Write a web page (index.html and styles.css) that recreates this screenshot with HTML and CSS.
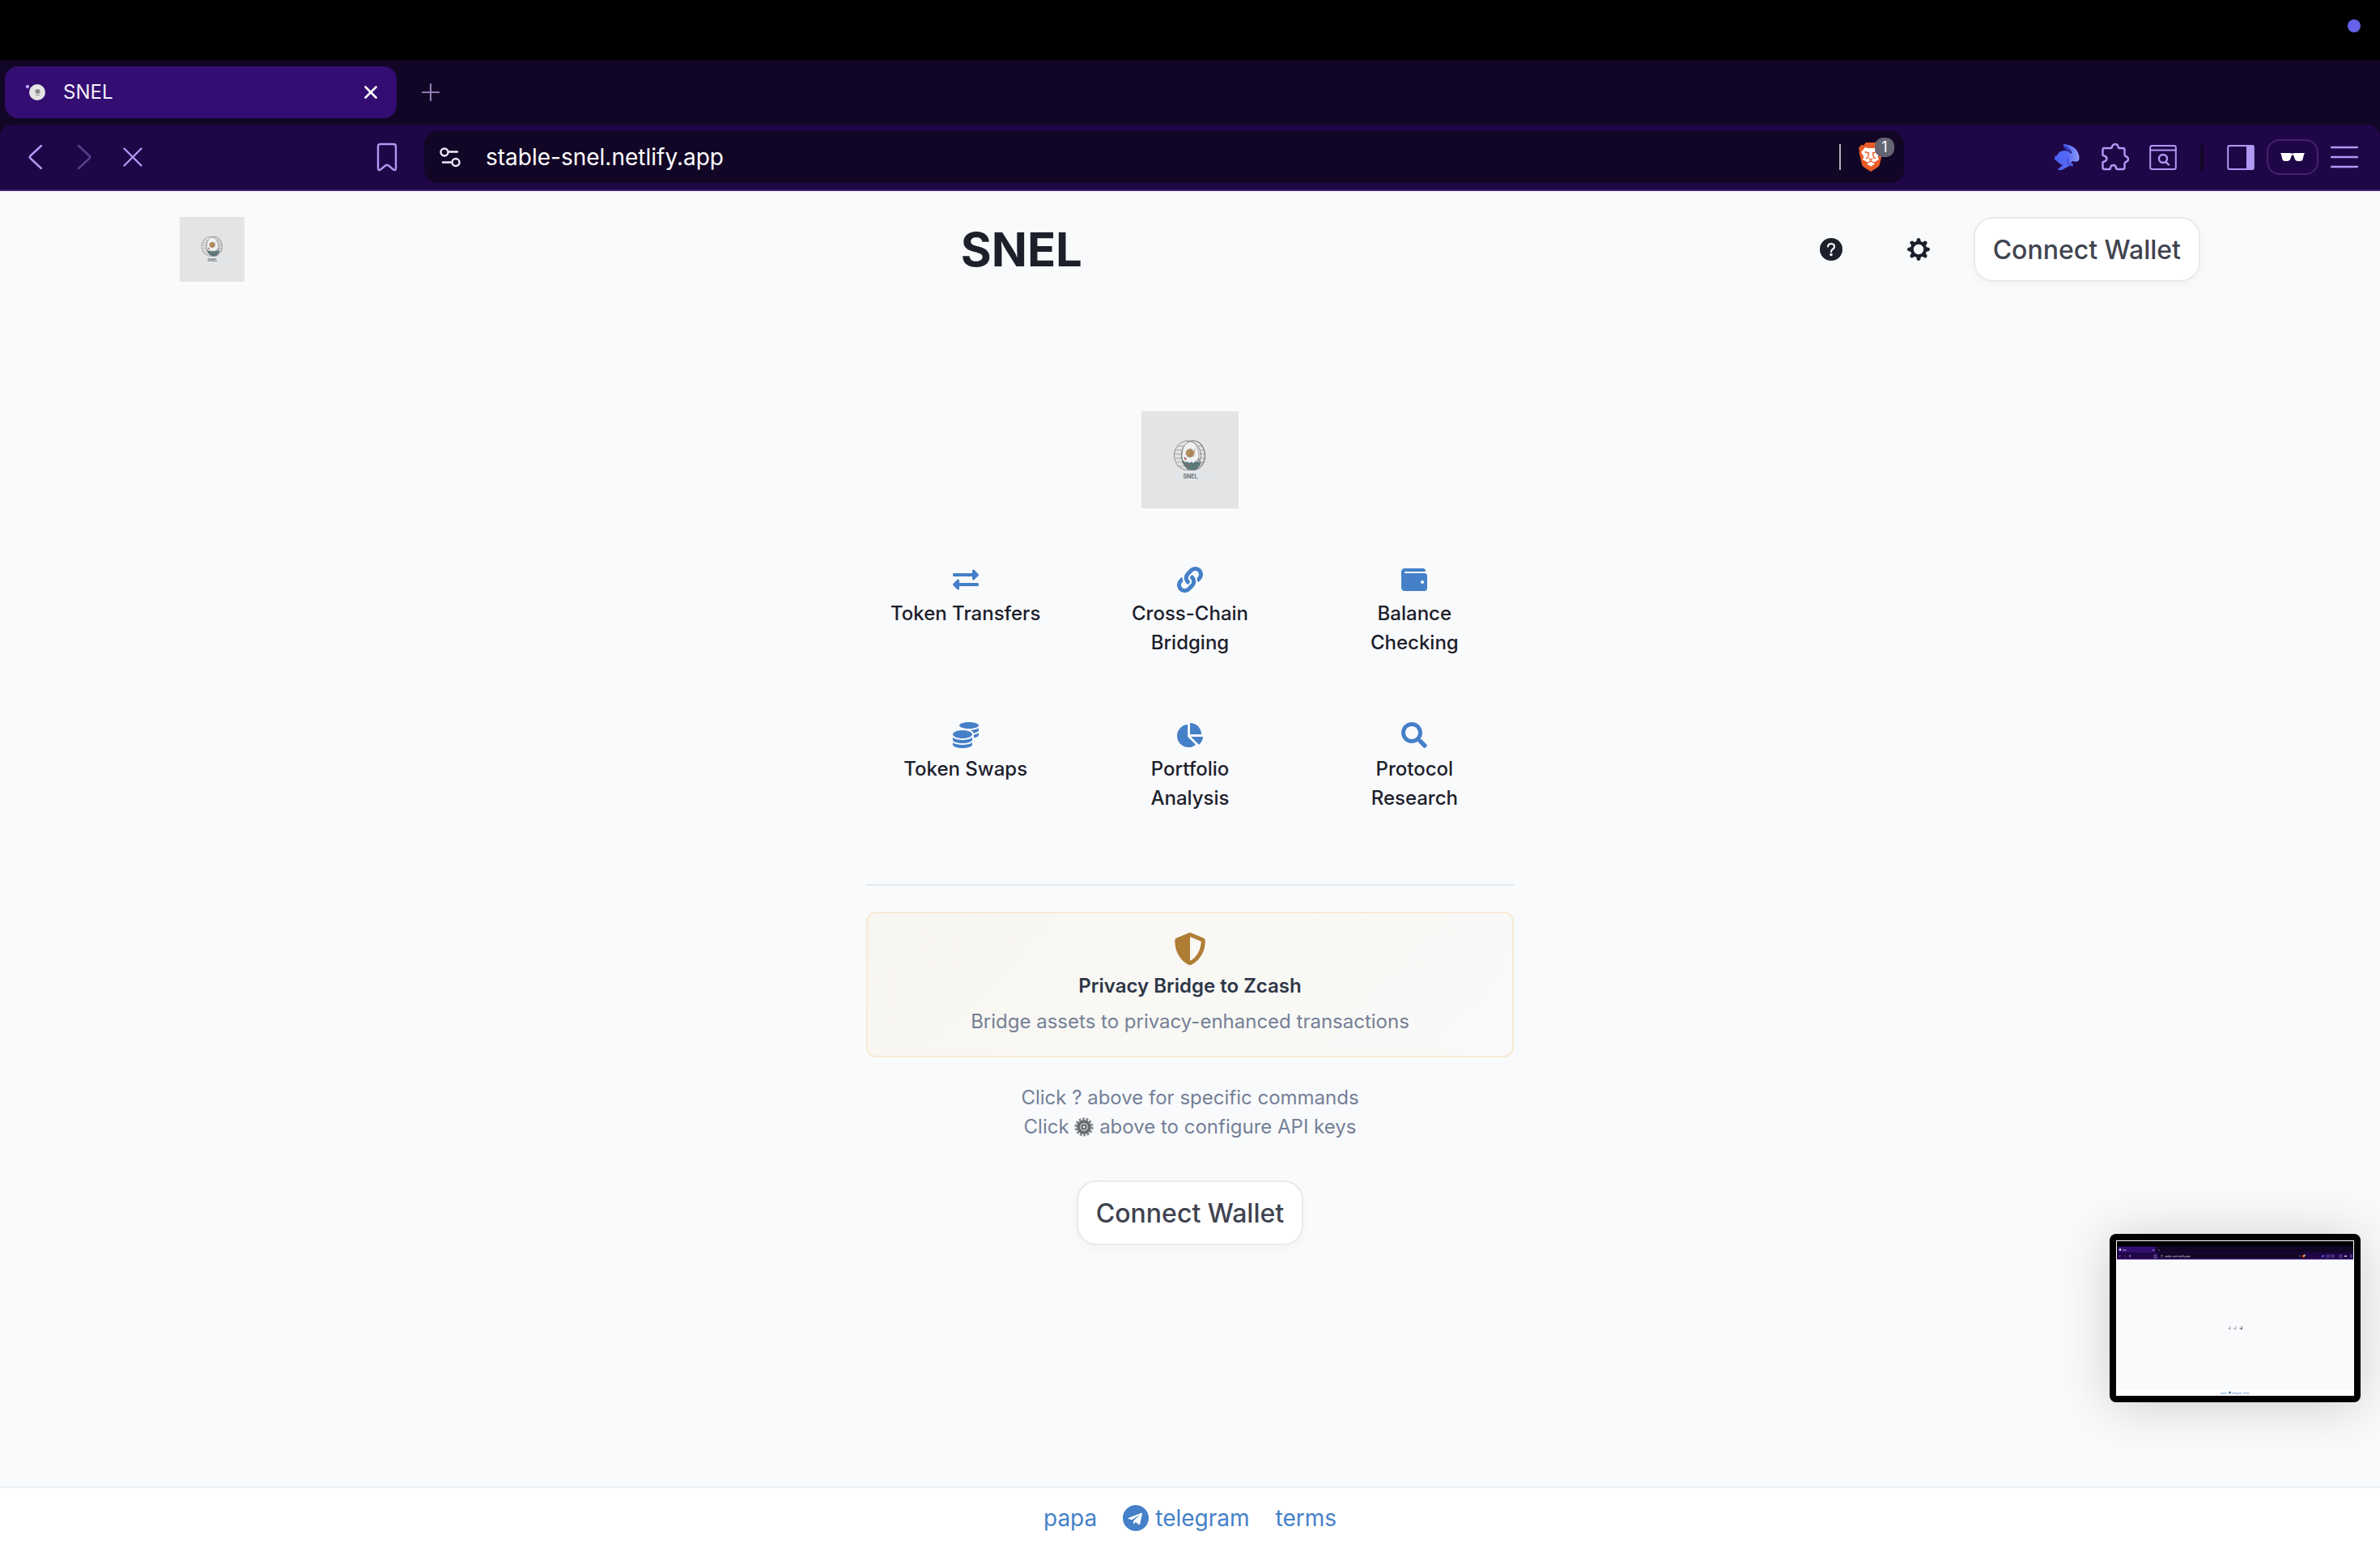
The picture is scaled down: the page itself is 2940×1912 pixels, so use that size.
FILE: index.html
```html
<!DOCTYPE html>
<html lang="en">
<head>
    <meta charset="UTF-8">
    <meta name="viewport" content="width=device-width, initial-scale=1.0">
    <title>SNEL</title>
    <link rel="stylesheet" href="styles.css">
</head>
<body>

    <!-- Browser window -->
    <div class="menu-bar"><span class="recording-dot"></span></div>

    <div class="tab-strip">
        <div class="tab">
            <svg class="favicon" viewBox="0 0 28 24"><circle cx="16" cy="12" r="10" fill="#e4e4e4"/><circle cx="4" cy="5" r="2.200" fill="#b39bf4"/><circle cx="16.500" cy="11" r="3" fill="#8d8b87"/><path d="M14 15.500h5" stroke="#9a9a9a"/></svg>
            <span class="tab-title">SNEL</span>
            <button class="icon-btn" aria-label="Close tab">
                <svg width="16" height="16" viewBox="0 0 16 16"><path d="M1.500 1.500l13 13M14.500 1.500l-13 13" stroke="#fff" stroke-width="2.600" stroke-linecap="round"/></svg>
            </button>
        </div>
        <button class="icon-btn" aria-label="New tab">
            <svg width="22" height="22" viewBox="0 0 22 22"><path d="M11 1v20M1 11h20" stroke="#8a7bb0" stroke-width="2.200" stroke-linecap="round"/></svg>
        </button>
    </div>

    <div class="toolbar">
        <div class="nav-buttons">
            <button class="icon-btn" aria-label="Back">
                <svg width="32" height="32" viewBox="0 0 32 32"><path d="M23 2L9.500 14.500q-1.500 1.500 0 3L23 30" class="line"/></svg>
            </button>
            <button class="icon-btn dim" aria-label="Forward">
                <svg width="32" height="32" viewBox="0 0 32 32"><path d="M9 2l13.500 12.500q1.500 1.500 0 3L9 30" class="line"/></svg>
            </button>
            <button class="icon-btn" aria-label="Stop loading">
                <svg width="32" height="32" viewBox="0 0 32 32"><path d="M5.500 5.500l21 21M26.500 5.500l-21 21" class="line"/></svg>
            </button>
            <button class="icon-btn bookmark" aria-label="Bookmark">
                <svg width="32" height="36" viewBox="0 0 32 36"><path d="M5 5q0-3 3-3h16q3 0 3 3v27q0 3-3 1.500l-6-5q-2-1.500-4 0l-6 5q-3 1.500-3-1.500z" class="line"/></svg>
            </button>
        </div>

        <div class="address-bar">
            <button class="icon-btn" aria-label="Site settings">
                <svg width="28" height="28" viewBox="0 0 28 28" fill="none" stroke="#eee9fa" stroke-width="2.400" stroke-linecap="round"><circle cx="7" cy="8" r="4.500"/><path d="M12 7.500h11M5 20.500h10"/><circle cx="21" cy="20.500" r="4.500"/></svg>
            </button>
            <input class="url" type="text" aria-label="Address" value="stable-snel.netlify.app">
            <span class="address-rule"></span>
            <button class="icon-btn shields" aria-label="Brave Shields">
                <svg width="30" height="36" viewBox="0 0 30 36">
                    <path d="M9 0h12l3 3.500 3-.5 3 4-1 3 .5 2-3.500 15q-.5 2-2.500 3.500L15 36l-8.500-5.500Q4.500 29 4 27L.5 12 1 10 0 7l3-4 3 .5z" fill="#e95b27"/>
                    <path d="M8 6l4 1h6l4-1 5 6-3.500 5.500 1.500 3.500-6 3.500-4-2.500-4 2.500L5 21l1.500-3.500L3 12z" fill="#fff"/>
                    <path d="M15 23.500l5 3-5 3-5-3z" fill="#fff"/>
                    <path d="M7.500 11.500l5 1.500-1 5-2.500 2M22.500 11.500l-5 1.500 1 5 2.500 2M12.500 19.500L15 21l2.500-1.500M15 21v3" stroke="#e95b27" stroke-width="1.400" fill="none"/>
                </svg>
                <span class="badge">1</span>
            </button>
        </div>

        <div class="tools">
            <div class="extensions">
                <button class="icon-btn" aria-label="Rabby Wallet">
                    <svg width="34" height="34" viewBox="0 0 34 34">
                        <defs>
                            <linearGradient id="rabbit" x1="0" y1="0" x2="1" y2="0"><stop offset="0" stop-color="#4a5df0"/><stop offset=".55" stop-color="#566bf3"/><stop offset="1" stop-color="#8d9bfa"/></linearGradient>
                        </defs>
                        <path d="M12 1q15 1 19 13 1 5 0 7-2 3-8 1l-2 2 3 2v2h-5l-9 5H5l1-2 5-4q-4-1-7-5l-3-2 0-3q1-2 3-2 2-6 9-6 5 0 9 4 1-5-7-8-4-2-3-4z" fill="url(#rabbit)"/>
                        <path d="M12 3q5 0 9 7l-1 2q-2-3-5-4-3-2-3-5z" fill="#3037b8"/>
                        <path d="M17 17q3 2 1 8l6 1v2q-4 1-8-2z" fill="#4150dc"/>
                    </svg>
                </button>
                <button class="icon-btn" aria-label="Extensions">
                    <svg width="34" height="34" viewBox="0 0 34 34"><path d="M3 6q-1.500 0-1.500 2v6q0 1.500 2 1.500 3 1 3 3.500t-3 3.500q-2 0-2 1.500v6q0 2 2 2h6q1.500 0 1.500-2 .5-3 3.500-3t3.500 3q0 2 1.500 2h7q2 0 2-2v-5q0-1.500 1.500-2 3-1 3-3.500t-3-3.500q-1.500-.5-1.500-2V8q0-2-2-2h-4q-2 0-2-2-.500-3-3.500-3T13 4q0 2-2 2z" class="line"/></svg>
                </button>
                <button class="icon-btn" aria-label="Search tabs">
                    <svg width="34" height="34" viewBox="0 0 34 34"><rect x="1.200" y="3" width="31.600" height="29" rx="2" class="line thin"/><path d="M1 8.500h32" class="line thin"/><circle cx="17" cy="19" r="5" class="line"/><path d="M20.500 23l3.500 3.500" class="line"/></svg>
                </button>
            </div>
            <span class="tools-rule"></span>
            <button class="icon-btn" aria-label="Sidebar">
                <svg width="34" height="34" viewBox="0 0 34 34"><rect x="1.200" y="3" width="31.600" height="29" rx="2" class="line thin"/><path d="M24 2.500h9v30h-9z" fill="#af99f3"/></svg>
            </button>
            <button class="icon-btn private" aria-label="Private window">
                <svg width="30" height="12" viewBox="0 0 30 12"><path d="M0 1h12.500q2.500 1 5 0H30l-1 2-1.500 6q-.5 2-3 2h-3q-2.500 0-3.500-2l-2-5.500h-2L12 9q-1 2-3.500 2h-3q-2.500 0-3-2L1 3z" fill="#fff"/></svg>
            </button>
            <button class="icon-btn" aria-label="Menu">
                <svg width="34" height="34" viewBox="0 0 34 34"><path d="M1 5h32M1 17h32M1 29h32" class="line"/></svg>
            </button>
        </div>
    </div>

    <!-- App -->
    <div class="app">
        <header class="header">
            <svg class="logo-small" viewBox="0 0 120 120" role="img" aria-label="SNEL logo">
                <g id="snel-logo">
                    <rect width="120" height="120" fill="#e4e4e4"/>
                    <rect x="42" y="72" width="48" height="18" fill="#e2e5e8"/>
                    <ellipse cx="57" cy="54.500" rx="16.500" ry="18" fill="#e2e2e3" stroke="#8c8e91" stroke-width="1"/>
                    <path d="M45 43h7M42 48h8M41 53h9M41 58h9M42 63h8M44 68h8M70 43h6M72 48h6M72 53h7M72 58h7M71 63h7" stroke="#a3a5a8" stroke-width="1"/>
                    <ellipse cx="64" cy="54.500" rx="14.500" ry="18" fill="none" stroke="#75787b" stroke-width="1.200"/>
                    <ellipse cx="60.500" cy="54.500" rx="10.500" ry="17" fill="#eff0f0" stroke="#8f9092" stroke-width=".8"/>
                    <path d="M50 60q3 1 4 3 3-2 5 1 3-3 5 0 3-4 6-1 2-2 4 0-3 9-11 10-10 0-13-13z" fill="#60787a"/>
                    <path d="M53 57l2 3M57 66l1 2" stroke="#a8606c" stroke-width="2"/>
                    <path d="M68 61l3-2 1 4" stroke="#8f9a9a" stroke-width="1.500" fill="none"/>
                    <path d="M56 56q6 1 9-1l1-9" fill="none" stroke="#c0bcb6" stroke-width="1.200"/>
                    <circle cx="60" cy="51.500" r="4.800" fill="#b98f5c" stroke="#8f7350" stroke-width=".7"/>
                    <path d="M60 49a2.500 2.500 0 1 1-2 4" fill="none" stroke="#87694a" stroke-width=".8"/>
                    <text x="60.500" y="83" text-anchor="middle" class="logo-word">SNEL</text>
                </g>
            </svg>
            <h1>SNEL</h1>
            <div class="header-actions">
                <button class="icon-btn square" aria-label="Help">
                    <svg width="28" height="28" viewBox="0 0 28 28"><circle cx="14" cy="14" r="14" fill="#1c202b"/><path d="M10 10.500q.5-3.500 4.200-3.500 3.800.2 3.800 3.500 0 2-2 3.200-2 1.200-2 3.300" fill="none" stroke="#f9fafc" stroke-width="2.200" stroke-linecap="round"/><circle cx="14" cy="20.500" r="1.800" fill="#f9fafc"/></svg>
                </button>
                <button class="icon-btn square" aria-label="Settings">
                    <svg width="28" height="28" viewBox="0 0 28 28">
                        <circle cx="14" cy="14" r="8.200" fill="none" stroke="#1c202b" stroke-width="4"/>
                        <g fill="#1c202b">
                            <path id="tooth" d="M11 5l1-4q2-2 4 0l1 4z"/>
                            <use href="#tooth" transform="rotate(45 14 14)"/>
                            <use href="#tooth" transform="rotate(90 14 14)"/>
                            <use href="#tooth" transform="rotate(135 14 14)"/>
                            <use href="#tooth" transform="rotate(180 14 14)"/>
                            <use href="#tooth" transform="rotate(225 14 14)"/>
                            <use href="#tooth" transform="rotate(270 14 14)"/>
                            <use href="#tooth" transform="rotate(315 14 14)"/>
                        </g>
                    </svg>
                </button>
                <button class="connect-btn">Connect Wallet</button>
            </div>
        </header>

        <main class="welcome">
            <svg class="logo-large" viewBox="0 0 120 120" role="img" aria-label="SNEL logo"><use href="#snel-logo"/></svg>

            <div class="features">
                <div class="feature">
                    <svg viewBox="0 0 512 512"><path d="M0 168v-16c0-13.255 10.745-24 24-24h360V80c0-21.367 25.899-32.042 40.971-16.971l80 80c9.372 9.373 9.372 24.569 0 33.941l-80 80C409.956 271.982 384 261.456 384 240v-48H24c-13.255 0-24-10.745-24-24zm488 152H128v-48c0-21.314-25.862-32.08-40.971-16.971l-80 80c-9.372 9.373-9.372 24.569 0 33.941l80 80C102.057 463.997 128 453.437 128 432v-48h360c13.255 0 24-10.745 24-24v-16c0-13.255-10.745-24-24-24z"/></svg>
                    <p>Token Transfers</p>
                </div>
                <div class="feature">
                    <svg viewBox="0 0 512 512"><path d="M326.612 185.391c59.747 59.809 58.927 155.698.36 214.59-.11.12-.24.25-.36.37l-67.2 67.2c-59.27 59.27-155.699 59.262-214.96 0-59.27-59.26-59.27-155.7 0-214.96l37.106-37.106c9.84-9.84 26.786-3.3 27.294 10.606.648 17.722 3.826 35.527 9.69 52.721 1.986 5.822.567 12.262-3.783 16.612l-13.087 13.087c-28.026 28.026-28.905 73.66-1.155 101.96 28.024 28.579 74.086 28.749 102.325.51l67.2-67.19c28.191-28.191 28.073-73.757 0-101.83-3.701-3.694-7.429-6.564-10.341-8.569a16.037 16.037 0 0 1-6.947-12.606c-.396-10.567 3.348-21.456 11.698-29.806l21.054-21.055c5.521-5.521 14.182-6.199 20.584-1.731a152.482 152.482 0 0 1 20.522 17.197zM467.547 44.449c-59.261-59.262-155.69-59.27-214.96 0l-67.2 67.2c-.12.12-.25.25-.36.37-58.566 58.892-59.387 154.781.36 214.59a152.454 152.454 0 0 0 20.521 17.196c6.402 4.468 15.064 3.789 20.584-1.731l21.054-21.055c8.35-8.35 12.094-19.239 11.698-29.806a16.037 16.037 0 0 0-6.947-12.606c-2.912-2.005-6.64-4.875-10.341-8.569-28.073-28.073-28.191-73.639 0-101.83l67.2-67.19c28.239-28.239 74.3-28.069 102.325.51 27.75 28.3 26.872 73.934-1.155 101.96l-13.087 13.087c-4.35 4.35-5.769 10.79-3.783 16.612 5.864 17.194 9.042 34.999 9.69 52.721.509 13.906 17.454 20.446 27.294 10.606l37.106-37.106c59.271-59.259 59.271-155.699.001-214.959z"/></svg>
                    <p>Cross-Chain<br>Bridging</p>
                </div>
                <div class="feature">
                    <svg viewBox="0 0 512 512"><path d="M461.2 128H80c-8.84 0-16-7.16-16-16s7.16-16 16-16h384c8.84 0 16-7.16 16-16 0-26.51-21.49-48-48-48H64C28.65 32 0 60.65 0 96v320c0 35.35 28.65 64 64 64h397.2c28.02 0 50.8-21.53 50.8-48V176c0-26.47-22.78-48-50.8-48zM416 336c-17.67 0-32-14.33-32-32s14.33-32 32-32 32 14.33 32 32-14.33 32-32 32z"/></svg>
                    <p>Balance<br>Checking</p>
                </div>
                <div class="feature">
                    <svg viewBox="0 0 512 512"><path d="M0 405.3V448c0 35.3 86 64 192 64s192-28.7 192-64v-42.7C342.7 434.4 267.2 448 192 448S41.3 434.4 0 405.3zM320 128c106 0 192-28.7 192-64S426 0 320 0 128 28.7 128 64s86 64 192 64zM0 300.4V352c0 35.3 86 64 192 64s192-28.7 192-64v-51.6c-41.3 34-116.9 51.6-192 51.6S41.3 334.4 0 300.4zm416 11c57.3-11.1 96-31.7 96-55.4v-42.7c-23.2 16.4-57.3 27.6-96 34.5v63.6zM192 160C86 160 0 195.8 0 240s86 80 192 80 192-35.8 192-80-86-80-192-80zm219.3 56.3c60-10.8 100.7-32 100.7-56.3v-42.7c-35.5 25.1-96.5 38.6-160.7 41.8 29.5 14.3 51.2 33.5 60 57.2z"/></svg>
                    <p>Token Swaps</p>
                </div>
                <div class="feature">
                    <svg viewBox="0 0 544 512"><path d="M527.79 288H290.5l158.03 158.03c6.04 6.04 15.98 6.53 22.19.68 38.7-36.46 65.32-85.61 73.13-140.86 1.34-9.46-6.51-17.85-16.06-17.85zm-15.83-64.8C503.72 103.74 408.26 8.28 288.8.04 279.68-.59 272 7.1 272 16.24V240h223.77c9.14 0 16.82-7.68 16.19-16.8zM224 288V50.71c0-9.55-8.39-17.4-17.84-16.06C86.99 51.49-4.1 155.6.14 280.37 4.5 408.51 114.83 513.59 243.03 511.98c50.4-.63 96.97-16.87 135.26-44.03 7.9-5.6 8.42-17.23 1.57-24.08L224 288z"/></svg>
                    <p>Portfolio<br>Analysis</p>
                </div>
                <div class="feature">
                    <svg viewBox="0 0 512 512"><path d="M505 442.7L405.3 343c-4.5-4.5-10.6-7-17-7H372c27.6-35.3 44-79.7 44-128C416 93.1 322.9 0 208 0S0 93.1 0 208s93.1 208 208 208c48.3 0 92.7-16.4 128-44v16.3c0 6.4 2.5 12.5 7 17l99.7 99.7c9.4 9.4 24.6 9.4 33.9 0l28.3-28.3c9.4-9.4 9.4-24.6.1-34zM208 336c-70.7 0-128-57.2-128-128 0-70.7 57.2-128 128-128 70.7 0 128 57.2 128 128 0 70.7-57.2 128-128 128z"/></svg>
                    <p>Protocol<br>Research</p>
                </div>
            </div>

            <hr class="divider">

            <section class="privacy-card">
                <svg viewBox="0 0 512 512"><path d="M466.500 83.700l-192-80a48.150 48.150 0 0 0-36.900 0l-192 80C27.700 91.100 16 108.600 16 128c0 198.500 114.500 335.700 221.500 380.300 11.800 4.900 25.100 4.900 36.900 0C360.100 472.600 496 349.300 496 128c0-19.400-11.700-36.900-29.500-44.300zM256.100 446.300l-.1-381 175.900 73.300c-3.300 151.400-82.100 261.100-175.800 307.700z"/></svg>
                <h2>Privacy Bridge to Zcash</h2>
                <p>Bridge assets to privacy-enhanced transactions</p>
            </section>

            <p class="hints">
                Click ? above for specific commands<br>
                Click <svg class="gear" viewBox="0 0 24 24" role="img" aria-label="settings"><circle cx="12" cy="12" r="10" fill="none" stroke="#85878a" stroke-width="3" stroke-dasharray="2.800 1.690"/><circle cx="12" cy="12" r="7" fill="#b3b6ba" stroke="#66696d" stroke-width="3.600"/><circle cx="12" cy="12" r="2.500" fill="#e6e8ea" stroke="#55585c" stroke-width="1.600"/></svg> above to configure API keys
            </p>

            <button class="connect-btn">Connect Wallet</button>
        </main>

        <footer class="footer">
            <a href="#">papa</a>
            <a href="#">
                <svg viewBox="0 8 496 496"><path d="M248 8C111 8 0 119 0 256s111 248 248 248 248-111 248-248S385 8 248 8zm121.800 169.900l-40.700 191.800c-3 13.600-11.100 16.900-22.400 10.500l-62-45.700-29.900 28.800c-3.300 3.300-6.100 6.100-12.500 6.100l4.400-63.100 114.900-103.800c5-4.400-1.100-6.900-7.700-2.500l-142 89.400-61.200-19.100c-13.300-4.200-13.600-13.300 2.800-19.700l239.100-92.200c11.100-4 20.800 2.700 17.200 19.500z"/></svg>
                telegram
            </a>
            <a href="#">terms</a>
        </footer>
    </div>

    <!-- Floating screen capture preview -->
    <div class="capture">
        <svg viewBox="0 0 294 192">
            <rect width="294" height="192" fill="#fff"/>
            <rect x="1" y="1" width="292" height="7" fill="#000"/>
            <rect x="1" y="7" width="292" height="9" fill="#120626"/>
            <rect x="2" y="8" width="47" height="7" rx="1" fill="#330d72"/>
            <rect x="1" y="15" width="292" height="9" fill="#1f0646"/>
            <rect x="1" y="23" width="292" height="1" fill="#8a68b8"/>
            <rect x="53" y="16" width="182" height="6" rx="1" fill="#120626"/>
            <circle cx="5" cy="11.500" r="1.200" fill="#fff"/>
            <text x="8" y="12.500" class="mini tab-name">SNEL</text>
            <text x="60" y="21" class="mini">stable-snel.netlify.app</text>
            <path d="M45 11l2 2m0-2l-2 2M52 12h2" stroke="#b9a9e6" stroke-width=".6"/>
            <path d="M5.500 18L4 19.500 5.500 21M16 18l2 3m0-3l-2 3M47 18h3v4l-1.500-1L47 22z" fill="none" stroke="#af99f3" stroke-width=".6"/>
            <path d="M10 18l1.500 1.500L10 21" fill="none" stroke="#5b4190" stroke-width=".6"/>
            <path d="M55 18.500h3M55 20.500h3M227 18v3" stroke="#aaa" stroke-width=".6"/>
            <circle cx="231.500" cy="19.500" r="1.700" fill="#e95b27"/>
            <rect x="232" y="17.500" width="2" height="2" fill="#aaa"/>
            <path d="M254 19l3-1v2l-3 1z" fill="#5668f2"/>
            <path d="M260 18h3v3h-3zM266 18h3v3h-3zM276 18h3v3h-3zM289 18h3M289 19.500h3M289 21h3" fill="none" stroke="#8d76cf" stroke-width=".6"/>
            <path d="M282 19.500h3" stroke="#fff" stroke-width="1.200"/>
            <rect x="1" y="24" width="292" height="161" fill="#f9fafc"/>
            <path d="M138 108.500h2v1.500h1v-4M145 108.500h2v1.500h1v-4" fill="none" stroke="#a9abaf" stroke-width="1"/>
            <path d="M152.500 108.500h2v1.500h1v-4" fill="none" stroke="#6f7277" stroke-width="1"/>
            <text x="129" y="189.500" class="mini link">papa</text>
            <circle cx="140.500" cy="188" r="1.500" fill="#4580c8"/>
            <text x="143" y="189.500" class="mini link">telegram</text>
            <text x="157" y="189.500" class="mini link">terms</text>
        </svg>
    </div>

</body>
</html>
```
FILE: styles.css
```css
* {
    box-sizing: border-box;
}
body {
    display: flex;
    flex-direction: column;
    min-height: 100vh;
    margin: 0;
    background-color: #f9fafc;
    color: #1c202b;
    font-family: Inter, "Liberation Sans", sans-serif;
    font-size: 24px;
    line-height: 36px;
}
h1, h2, p {
    margin: 0;
}
svg {
    display: block;
    flex-shrink: 0;
}
button, input {
    font-family: inherit;
    border: none;
    background: none;
    padding: 0;
}
button {
    cursor: pointer;
}
.logo-word {
    font-size: 7px;
    font-weight: 600;
    fill: #5d676b;
}

/* Browser window */
.menu-bar {
    display: flex;
    align-items: flex-start;
    justify-content: flex-end;
    height: 74px;
    padding: 24px;
    background-color: #000;
}
.recording-dot {
    width: 16px;
    height: 16px;
    border-radius: 50%;
    background-color: #6661ea;
}
.icon-btn {
    display: flex;
    align-items: center;
    justify-content: center;
}
.line {
    fill: none;
    stroke: #af99f3;
    stroke-width: 2.4px;
    stroke-linecap: round;
    stroke-linejoin: round;
}
.thin {
    stroke-width: 2px;
}
.tab-strip {
    display: flex;
    align-items: center;
    gap: 31px;
    height: 80px;
    padding: 0 6px;
    background-color: #120626;
}
.tab {
    display: flex;
    align-items: center;
    width: 484px;
    height: 64px;
    padding: 0 24px;
    border-radius: 16px;
    background-color: #330d72;
}
.favicon {
    width: 28px;
    height: 24px;
    margin-right: 20px;
}
.tab-title {
    flex: 1;
    color: #f4effc;
}
.toolbar {
    display: flex;
    align-items: center;
    height: 82px;
    border-bottom: 2px solid #42236f;
    background:
        radial-gradient(circle at 100% 100%, #1f0646 16px, #120626 17px) left top / 16px 16px no-repeat,
        radial-gradient(circle at 0 100%, #1f0646 16px, #120626 17px) right top / 16px 16px no-repeat,
        #1f0646;
}
.nav-buttons {
    display: flex;
    align-items: center;
    gap: 28px;
    width: 524px;
    padding: 0 30px 0 28px;
}
.bookmark {
    margin-left: auto;
}
.dim {
    opacity: 0.4;
}
.address-bar {
    display: flex;
    align-items: center;
    flex: 1;
    height: 64px;
    padding: 0 26px 0 18px;
    border-radius: 16px;
    background-color: #120626;
}
.url {
    flex: 1;
    margin-left: 30px;
    color: #fff;
    font-size: 28px;
}
.address-rule {
    width: 2px;
    height: 32px;
    margin-right: 22px;
    background-color: #b5b1bc;
}
.shields {
    position: relative;
}
.badge {
    position: absolute;
    top: -6px;
    right: -14px;
    width: 24px;
    height: 24px;
    border-radius: 10px;
    background-color: #646472;
    color: #fff;
    font-size: 18px;
    line-height: 24px;
}
.tools {
    display: flex;
    align-items: center;
    justify-content: flex-end;
    gap: 15px;
    width: 588px;
    padding-right: 27px;
}
.extensions {
    display: flex;
    gap: 25px;
}
.tools-rule {
    width: 4px;
    height: 32px;
    margin: 0 14px;
    border-radius: 2px;
    background-color: #120626;
}
.private {
    width: 64px;
    height: 44px;
    border: 2px solid #42236f;
    border-radius: 16px;
}

/* App */
.app {
    display: flex;
    flex-direction: column;
    flex: 1;
}
.header {
    display: flex;
    align-items: center;
    justify-content: space-between;
    width: 100%;
    max-width: 2560px;
    margin: 0 auto;
    padding: 32px;
}
.logo-small {
    width: 80px;
    height: 80px;
}
h1 {
    font-size: 58px;
    font-weight: 700;
    line-height: 80px;
}
.header-actions {
    display: flex;
    align-items: center;
    gap: 28px;
}
.square {
    width: 80px;
    height: 80px;
}
.connect-btn {
    height: 80px;
    padding: 0 22px;
    border: 2px solid #e9eaec;
    border-radius: 24px;
    background-color: #fff;
    box-shadow: 0 4px 12px rgba(0, 0, 0, 0.03);
    color: #40434f;
    font-size: 32px;
    font-weight: 500;
}
.welcome {
    display: flex;
    flex-direction: column;
    align-items: center;
    flex: 1;
    width: 100%;
    max-width: 800px;
    margin: 0 auto;
    padding-top: 128px;
    text-align: center;
}
.logo-large {
    width: 120px;
    height: 120px;
}
.features {
    display: grid;
    grid-template-columns: repeat(3, 1fr);
    gap: 32px;
    width: 100%;
    margin: 48px 0 64px;
}
.feature {
    display: flex;
    flex-direction: column;
    align-items: center;
    gap: 8px;
    padding: 24px;
    font-weight: 500;
}
.feature svg {
    width: 32px;
    height: 32px;
    fill: #4580c8;
}
.divider {
    width: 100%;
    margin: 0 0 32px;
    border: none;
    border-top: 2px solid #e2e8ee;
}
.privacy-card {
    display: flex;
    flex-direction: column;
    align-items: center;
    gap: 8px;
    width: 100%;
    padding: 24px;
    border: 2px solid #f7ead3;
    border-radius: 12px;
    background: linear-gradient(135deg, #f8f6f0, #f9faf9);
}
.privacy-card svg {
    width: 40px;
    height: 40px;
    fill: #b07d35;
}
.privacy-card h2 {
    color: #2e3648;
    font-size: 24px;
    font-weight: 600;
}
.privacy-card p, .hints {
    color: #748096;
}
.hints {
    margin: 32px 0 48px;
}
.gear {
    display: inline-block;
    width: 24px;
    height: 24px;
    vertical-align: -4px;
}
.footer {
    display: flex;
    justify-content: center;
    gap: 32px;
    padding: 16px;
    border-top: 2px solid #eef1f5;
    background-color: #fff;
    font-size: 28px;
    line-height: 42px;
}
.footer a {
    display: flex;
    align-items: center;
    gap: 8px;
    color: #4580c8;
    text-decoration: none;
}
.footer svg {
    width: 32px;
    height: 32px;
    fill: #4580c8;
}

/* Screen capture preview */
.capture {
    position: fixed;
    right: 24px;
    bottom: 180px;
    width: 310px;
    padding: 8px;
    border-radius: 8px;
    background-color: #000;
    box-shadow: 0 4px 64px rgba(0, 0, 0, 0.18);
}
.mini {
    font-size: 3px;
    fill: #d8cff0;
}
.mini.tab-name {
    font-size: 2px;
}
.mini.link {
    fill: #4580c8;
}
```
